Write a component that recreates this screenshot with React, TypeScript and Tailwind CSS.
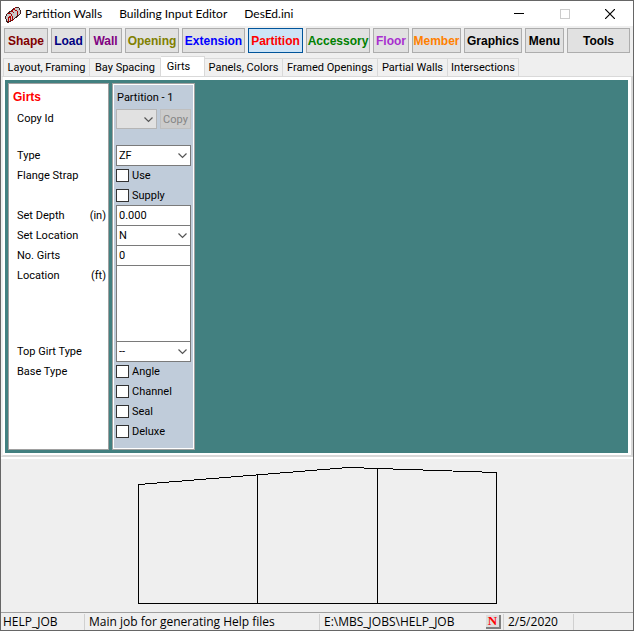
import { useState } from "react";
import type { ReactNode } from "react";

const tools = [
  { name: "Shape", style: "w-[44px] text-[#800000]" },
  { name: "Load", style: "w-[35px] text-[#000080]" },
  { name: "Wall", style: "w-[33px] text-[#800080]" },
  { name: "Opening", style: "w-[54px] text-[#808000]" },
  { name: "Extension", style: "w-[63px] text-[#0000ff]" },
  { name: "Partition", style: "w-[55px] text-[#ff0000]" },
  { name: "Accessory", style: "w-[64px] text-[#008000]" },
  { name: "Floor", style: "w-[36px] text-[#a82fcf]" },
  { name: "Member", style: "w-[49px] text-[#ff8000]" },
  { name: "Graphics", style: "w-[58px] text-black" },
  { name: "Menu", style: "w-[39px] text-black" },
  { name: "Tools", style: "min-w-[50px] flex-1 text-black" },
];

const tabs = [
  { name: "Layout, Framing", width: "w-[87px]" },
  { name: "Bay Spacing", width: "w-[71px]" },
  { name: "Girts", width: "w-[44px]" },
  { name: "Panels, Colors", width: "w-[78px]" },
  { name: "Framed Openings", width: "w-[95px]" },
  { name: "Partial Walls", width: "w-[70px]" },
  { name: "Intersections", width: "w-[71px]" },
];

function AppIcon() {
  return (
    <svg width="18" height="18" viewBox="0 0 18 18" shapeRendering="crispEdges" aria-hidden="true">
      <path d="M1.5 11.5 3.5 8.5 11.5 2.5 14.5 2.5 16.5 5.5 16.5 8.5 9.5 14.5 4.5 17.5 2.5 16.5Z" fill="#c8c8c8" stroke="#402020" />
      <path d="M3.5 8.5 6.5 8.5 8.5 11.5 8.5 15.5M11.5 2.5 7.5 6.5 10.5 7.5M10.5 4.5 13.5 6.5 13.5 9.5M4.5 16.5V12.5L6.5 11.5V15.5" fill="none" stroke="#b00000" />
    </svg>
  );
}

function TitleBar() {
  return (
    <header className="flex h-[25px] items-center bg-white pl-[3px] font-[Lato,'Open_Sans',sans-serif] text-[12px] text-black">
      <AppIcon />
      <h1 className="flex gap-[17px] pl-[3px] whitespace-nowrap">
        <span>Partition Walls</span>
        <span>Building Input Editor</span>
        <span>DesEd.ini</span>
      </h1>
      <div className="ml-auto flex">
        <button aria-label="Minimize" className="flex h-6 w-[46px] items-center justify-center">
          <svg width="10" height="10" shapeRendering="crispEdges"><path d="M0 4.5H10" stroke="#000" /></svg>
        </button>
        <button aria-label="Maximize" disabled className="flex h-6 w-[45px] items-center justify-center">
          <svg width="10" height="10" shapeRendering="crispEdges"><path d="M.5.5H9.5V9.5H.5Z" fill="none" stroke="#ccc" /></svg>
        </button>
        <button aria-label="Close" className="flex h-6 w-[46px] items-center justify-center">
          <svg width="10" height="10"><path d="M0 0 10 10M10 0 0 10" stroke="#000" strokeWidth="1.2" /></svg>
        </button>
      </div>
    </header>
  );
}

function Chevron() {
  return (
    <svg className="pointer-events-none absolute top-2 right-1" width="9" height="6" viewBox="0 0 9 6" aria-hidden="true">
      <path d="M.5.5 4.5 4.5 8.5.5" fill="none" stroke="#555" strokeWidth="1.2" />
    </svg>
  );
}

function Combo({ label, value, options }: { label: string; value: string; options: string[] }) {
  return (
    <div className="relative -mb-px h-[21px]">
      <select aria-label={label} defaultValue={value} className="h-full w-full appearance-none border border-[#7a7a7a] bg-white px-[2px]">
        {options.map((o) => <option key={o}>{o}</option>)}
      </select>
      <Chevron />
    </div>
  );
}

function Check({ label }: { label: string }) {
  return (
    <label className="flex h-5 items-center gap-[3px]">
      <input type="checkbox" className="size-[13px] appearance-none border border-[#333] bg-white checked:bg-[#333]" />
      <span className="pt-[2px]">{label}</span>
    </label>
  );
}

function Field({ label, value }: { label: string; value: string }) {
  return <input aria-label={label} defaultValue={value} className="-mb-px block h-[21px] w-full border border-[#7a7a7a] bg-white px-[2px]" />;
}

function Row({ children, unit }: { children: ReactNode; unit?: string }) {
  return (
    <div className="flex h-5 items-center justify-between pt-[2px]">
      <span>{children}</span>
      {unit && <span>({unit})</span>}
    </div>
  );
}

function GirtPanels() {
  return (
    <div className="flex min-h-[373px] gap-[3px] bg-[#428080] px-[3px] py-[3px]">
      <section className="w-[101px] border border-[#a0a0a0] bg-white pt-[3px] pr-[2px] pl-[8px] shadow-[inset_1px_1px_0_#fff]">
        <h2 className="-ml-1 flex h-5 items-center font-['Liberation_Sans',sans-serif] text-[12px] font-bold text-[#ff0000]">Girts</h2>
        <div className="pt-[1px] pb-[17px]"><Row>Copy Id</Row></div>
        <Row>Type</Row>
        <div className="pb-5"><Row>Flange Strap</Row></div>
        <Row unit="in">Set Depth</Row>
        <Row>Set Location</Row>
        <Row>No. Girts</Row>
        <div className="pb-14"><Row unit="ft">Location</Row></div>
        <Row>Top Girt Type</Row>
        <Row>Base Type</Row>
      </section>
      <section className="w-[83px] border border-[#a0a0a0] bg-[#c0ccda] shadow-[inset_1px_1px_0_#fff,inset_-1px_-1px_0_#fff]">
        <div className="px-[3px] pt-[3px]">
          <h2 className="flex h-5 items-center pt-[2px] pl-[1px]">Partition - 1</h2>
          <div className="mt-[2px] mb-4 flex h-5 gap-[3px]">
            <div className="relative w-[41px]">
              <select aria-label="Copy Id" disabled className="h-full w-full appearance-none border border-[#b5b5b5] bg-[#e1e1e1]"><option> </option></select>
              <Chevron />
            </div>
            <button disabled className="flex-1 border border-[#bfbfbf] bg-[#ccc] pt-px text-[#858585]">Copy</button>
          </div>
          <Combo label="Type" value="ZF" options={["ZF", "ZB", "CF"]} />
          <Check label="Use" />
          <Check label="Supply" />
          <Field label="Set Depth" value="0.000" />
          <Combo label="Set Location" value="N" options={["N", "Y"]} />
          <Field label="No. Girts" value="0" />
          <textarea aria-label="Location" className="-mb-px block h-[77px] w-full resize-none border border-[#7a7a7a] bg-white px-[2px]" />
          <Combo label="Top Girt Type" value="--" options={["--", "ZF"]} />
          <Check label="Angle" />
          <Check label="Channel" />
          <Check label="Seal" />
          <Check label="Deluxe" />
        </div>
      </section>
    </div>
  );
}

function FrameDrawing() {
  return (
    <svg className="mx-auto block" width="360" height="138" viewBox="0 0 360 138" shapeRendering="crispEdges" role="img" aria-label="Partition elevation">
      <path d="M1.5 137.5V18.5L211.5 1.5 359.5 6.5V137.5ZM120.5 9V137.5M240.5 3V137.5" fill="none" stroke="#000" />
    </svg>
  );
}

export default function App() {
  const [tool, setTool] = useState("Partition");
  const [tab, setTab] = useState("Girts");
  return (
    <main className="border border-[#666] bg-[#efefef] font-[Roboto,'Liberation_Sans',sans-serif] text-[11px] leading-4 text-black">
      <TitleBar />
      <nav className="flex gap-[3px] px-[3px] pt-[2px] pb-[3px]">
        {tools.map((t) => (
          <button
            key={t.name}
            onClick={() => setTool(t.name)}
            className={`h-[25px] border text-center font-['Liberation_Sans',sans-serif] text-[12px] font-bold whitespace-nowrap ${t.style} ${tool === t.name ? "border-[#00549a] bg-[#cce4f7]" : "border-[#adadad] bg-[#e1e1e1]"}`}
          >
            {t.name}
          </button>
        ))}
      </nav>
      <div role="tablist" className="flex h-[20px] items-end pl-[2px]">
        {tabs.map((t) => (
          <button
            key={t.name}
            role="tab"
            aria-selected={tab === t.name}
            onClick={() => setTab(t.name)}
            className={`border-t border-r border-[#d9d9d9] whitespace-nowrap first:border-l ${t.width} ${tab === t.name ? "h-[20px] bg-white pr-2" : "h-[18px] bg-[#f0f0f0] pt-px"}`}
          >
            {t.name}
          </button>
        ))}
      </div>
      <div className="border-2 border-t border-[#d9d9d9] border-l-[#efefef] bg-white pt-[3px] pr-[3px] pb-[2px] pl-[2px]">
        <GirtPanels />
      </div>
      <div className="border-t-2 border-white pt-[7px] pb-2">
        <FrameDrawing />
      </div>
      <footer className="flex h-[18px] items-center border-t border-[#a0a0a0] font-['Open_Sans','Noto_Sans',sans-serif] text-[12px] whitespace-nowrap">
        <span className="w-[83px] pl-[2px]">HELP_JOB</span>
        <span className="w-[235px] border-l border-[#d0d0d0] pl-1">Main job for generating Help files</span>
        <span className="flex w-[184px] items-center justify-between border-l border-[#d0d0d0] pr-[2px] pl-1">
          E:\MBS_JOBS\HELP_JOB
          <button className="h-[14px] w-[15px] border-r-2 border-b-2 border-[#808080] bg-[#dedede] font-['Liberation_Serif',serif] text-[13px] leading-3 font-bold text-[#ff0000]">N</button>
        </span>
        <span className="w-[71px] border-x border-[#d0d0d0] pl-1">2/5/2020</span>
      </footer>
    </main>
  );
}
